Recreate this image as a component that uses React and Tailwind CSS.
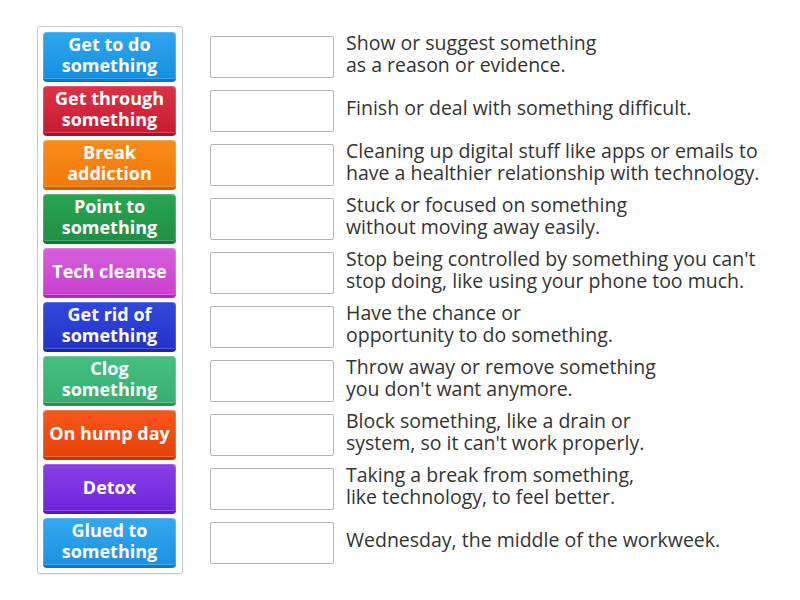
import React from "react";

const items = [
  { label: ["Get to do", "something"], bg: "bg-gradient-to-b from-[#2ea6ee] to-[#168fe0]", edge: "border-[#1176c0]", desc: ["Show or suggest something", "as a reason or evidence."] },
  { label: ["Get through", "something"], bg: "bg-gradient-to-b from-[#dc3247] to-[#c81a31]", edge: "border-[#a3142a]", desc: ["Finish or deal with something difficult."] },
  { label: ["Break", "addiction"], bg: "bg-gradient-to-b from-[#fb8a1a] to-[#f37a06]", edge: "border-[#cc6205]", desc: ["Cleaning up digital stuff like apps or emails to", "have a healthier relationship with technology."] },
  { label: ["Point to", "something"], bg: "bg-gradient-to-b from-[#2aa653] to-[#1f8f44]", edge: "border-[#177436]", desc: ["Stuck or focused on something", "without moving away easily."] },
  { label: ["Tech cleanse"], bg: "bg-gradient-to-b from-[#d75fdc] to-[#c83fcf]", edge: "border-[#a52eac]", desc: ["Stop being controlled by something you can't", "stop doing, like using your phone too much."] },
  { label: ["Get rid of", "something"], bg: "bg-gradient-to-b from-[#3447dc] to-[#2232c8]", edge: "border-[#1a27a3]", desc: ["Have the chance or", "opportunity to do something."] },
  { label: ["Clog", "something"], bg: "bg-gradient-to-b from-[#45c083] to-[#35b070]", edge: "border-[#27905a]", desc: ["Throw away or remove something", "you don't want anymore."] },
  { label: ["On hump day"], bg: "bg-gradient-to-b from-[#f9561a] to-[#e6420a]", edge: "border-[#bf3505]", desc: ["Block something, like a drain or", "system, so it can't work properly."] },
  { label: ["Detox"], bg: "bg-gradient-to-b from-[#8a3ee6] to-[#7024da]", edge: "border-[#5a18b5]", desc: ["Taking a break from something,", "like technology, to feel better."] },
  { label: ["Glued to", "something"], bg: "bg-gradient-to-b from-[#35a8ef] to-[#1a92e2]", edge: "border-[#1378c2]", desc: ["Wednesday, the middle of the workweek."] },
];

export default function App() {
  return (
    <div
      className="w-[800px] h-[600px] bg-white flex items-start pt-[26px] pl-[37px]"
      style={{ fontFamily: '"Open Sans", "Liberation Sans", sans-serif' }}
    >
      <div className="w-[146px] border border-[#c8c8c8] rounded-[3px] p-[5px] flex flex-col gap-[4px] shadow-[0_1px_1px_rgba(0,0,0,0.08)]">
        {items.map((it, i) => (
          <div
            key={i}
            className={`h-[50px] w-[133px] rounded-[4px] border-b-[3px] ${it.edge} ${it.bg} shadow-[inset_0_0_0_1px_rgba(255,255,255,0.2)] flex flex-col items-center justify-center text-white font-bold text-[18px] leading-[21px] pb-[1px]`}
          >
            {it.label.map((l, j) => (
              <span key={j} className="whitespace-nowrap">{l}</span>
            ))}
          </div>
        ))}
      </div>
      <div className="flex flex-col gap-[4px] pt-[6px] pl-[27px]">
        {items.map((it, i) => (
          <div key={i} className="h-[50px] flex items-center">
            <div className="w-[124px] h-[42px] border border-[#b4b4b4] rounded-[2px] bg-white" />
            <div className="pl-[12px] pb-[6px] text-[#333333] text-[19.5px] leading-[22px]">
              {it.desc.map((d, j) => (
                <div key={j} className="whitespace-nowrap">{d}</div>
              ))}
            </div>
          </div>
        ))}
      </div>
    </div>
  );
}
